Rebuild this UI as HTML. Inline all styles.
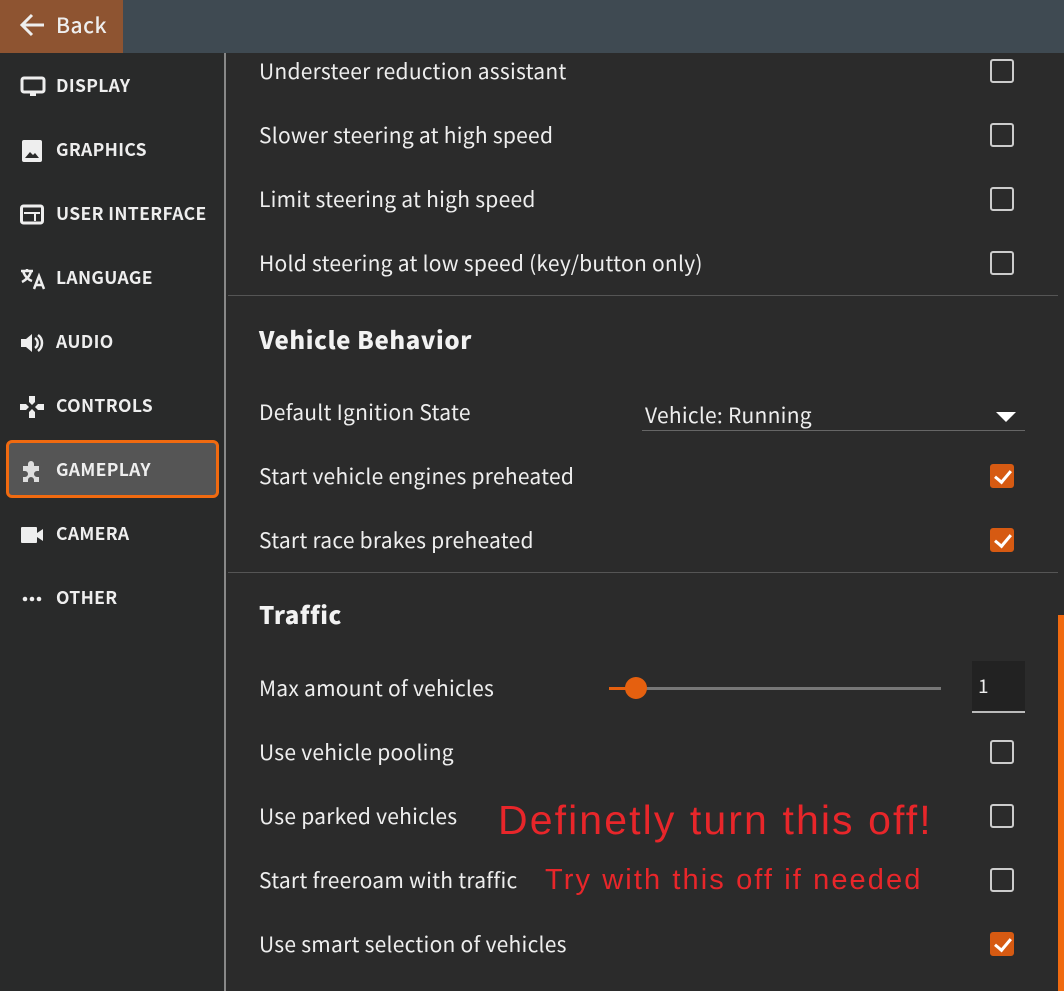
<!DOCTYPE html>
<html><head><meta charset="utf-8"><style>
*{margin:0;padding:0;box-sizing:border-box}
body{width:1064px;height:991px;overflow:hidden;background:#2b2b2b;font-family:"Noto Sans CJK SC","Liberation Sans",sans-serif;color:#eee;position:relative}
.top{position:absolute;left:0;top:0;width:1064px;height:53px;background:#3f4a52}
.back{position:absolute;left:0;top:0;width:123px;height:53px;background:#8e5431;color:#eee;font-size:21px;font-weight:500;line-height:50px;padding-left:56px;letter-spacing:.5px}
.back svg{position:absolute;left:20px;top:13px}
.side{position:absolute;left:0;top:53px;width:226px;height:938px;background:#292a2a;border-right:2px solid #888}
.nav{position:absolute;left:20px;height:30px;font-size:17.5px;font-weight:700;line-height:30px;padding-left:36px;color:#eee;letter-spacing:.35px}
.nav svg{position:absolute;left:0;top:5px}
.sel{position:absolute;left:6px;top:387px;width:213px;height:58px;border:3px solid #f06a10;border-radius:6px;background:#555}
.main{position:absolute;left:228px;top:53px;width:836px;height:938px}
.row{position:absolute;left:31px;font-size:21px;line-height:28px;color:#eee;letter-spacing:.25px}
.cb{position:absolute;left:762px;width:24px;height:24px;border:2px solid #ccc;border-radius:3px}
.cb.on{background:#d65a12;border-color:#d65a12}
.cb.on::after{content:"";position:absolute;left:6px;top:1px;width:7px;height:13px;border:solid #fff;border-width:0 3px 3px 0;transform:rotate(40deg)}
.sep{position:absolute;left:0;width:830px;height:1px;background:#555}
h2{position:absolute;left:31px;font-size:24px;font-weight:900;color:#f2f2f2;letter-spacing:.6px}
.red{position:absolute;color:#e8262a;font-family:"Liberation Sans",sans-serif}
</style></head><body>
<div class="top"></div>
<div class="back"><svg width="26" height="24" viewBox="0 0 26 24"><path d="M12 2L2 12l10 10M2 12h22" stroke="#eee" stroke-width="3" fill="none"/></svg>Back</div>
<div class="side">
<div class="nav" style="top:18px"><svg width="26" height="22" viewBox="0 0 26 22"><rect x="2" y="2" width="22" height="14" rx="2" fill="none" stroke="#eee" stroke-width="3"/><rect x="10" y="17" width="6" height="3" fill="#eee"/></svg>DISPLAY</div>
<div class="nav" style="top:82px"><svg width="24" height="22" viewBox="0 0 24 22"><rect x="2" y="0" width="20" height="22" rx="2" fill="#eee"/><path d="M5 18l5-6 3 3 2-2 4 5z" fill="#292a2a"/></svg>GRAPHICS</div>
<div class="nav" style="top:146px"><svg width="24" height="22" viewBox="0 0 24 22"><rect x="1.5" y="2" width="21" height="17" rx="2" fill="none" stroke="#eee" stroke-width="3"/><rect x="4" y="8" width="16" height="2" fill="#eee"/><rect x="14" y="10" width="2" height="7" fill="#eee"/></svg>USER INTERFACE</div>
<div class="nav" style="top:210px"><svg width="26" height="22" viewBox="0 0 26 22"><path d="M1 3h12M7 1v2M3 3c2 6 6 9 9 10M11 3c-1 5-5 9-9 11M14 21l5-13 5 13M16 17h6" stroke="#eee" stroke-width="2.5" fill="none"/></svg>LANGUAGE</div>
<div class="nav" style="top:274px"><svg width="24" height="22" viewBox="0 0 24 22"><path d="M1 7h5l6-5v18l-6-5H1z" fill="#eee"/><path d="M15 6a6 6 0 010 10M18 3a10 10 0 010 16" stroke="#eee" stroke-width="2.5" fill="none"/></svg>AUDIO</div>
<div class="nav" style="top:338px"><svg width="24" height="22" viewBox="0 0 24 22"><path d="M9 0h6v6l-3 3-3-3zM9 22h6v-6l-3-3-3 3zM0 8v6h6l3-3-3-3zM24 8v6h-6l-3-3 3-3z" fill="#eee"/></svg>CONTROLS</div>
<div class="sel"></div>
<div class="nav" style="top:402px"><svg width="24" height="24" viewBox="0 0 24 24"><path d="M3 6h5V4a3 3 0 016 0v2h5v5h-2a3 3 0 000 6h2v5h-5v-2a3 3 0 00-6 0v2H3v-5h2a3 3 0 000-6H3z" fill="#ddd"/></svg>GAMEPLAY</div>
<div class="nav" style="top:466px"><svg width="24" height="22" viewBox="0 0 24 22"><rect x="1" y="3" width="16" height="16" rx="1" fill="#eee"/><path d="M17 9l6-4v12l-6-4z" fill="#eee"/></svg>CAMERA</div>
<div class="nav" style="top:530px"><svg width="24" height="22" viewBox="0 0 24 22"><circle cx="5" cy="11" r="2.3" fill="#eee"/><circle cx="12" cy="11" r="2.3" fill="#eee"/><circle cx="19" cy="11" r="2.3" fill="#eee"/></svg>OTHER</div>
</div>
<div class="main">
<div class="row" style="top:4px">Understeer reduction assistant</div><div class="cb" style="top:6px"></div>
<div class="row" style="top:68px">Slower steering at high speed</div><div class="cb" style="top:70px"></div>
<div class="row" style="top:132px">Limit steering at high speed</div><div class="cb" style="top:134px"></div>
<div class="row" style="top:196px">Hold steering at low speed (key/button only)</div><div class="cb" style="top:198px"></div>
<div class="sep" style="top:242px"></div>
<h2 style="top:268px">Vehicle Behavior</h2>
<div class="row" style="top:345px">Default Ignition State</div>
<div class="row" style="top:348px;left:417px">Vehicle: Running</div>
<div style="position:absolute;left:768px;top:359px;border-left:10px solid transparent;border-right:10px solid transparent;border-top:10px solid #fff"></div>
<div style="position:absolute;left:414px;top:377px;width:383px;height:1px;background:#666"></div>
<div class="row" style="top:409px">Start vehicle engines preheated</div><div class="cb on" style="top:411px"></div>
<div class="row" style="top:473px">Start race brakes preheated</div><div class="cb on" style="top:475px"></div>
<div class="sep" style="top:519px"></div>
<h2 style="top:543px">Traffic</h2>
<div class="row" style="top:621px">Max amount of vehicles</div>
<div style="position:absolute;left:381px;top:634px;width:332px;height:3px;background:#777"></div>
<div style="position:absolute;left:381px;top:634px;width:26px;height:3px;background:#e5600f"></div>
<div style="position:absolute;left:397px;top:624px;width:22px;height:22px;border-radius:50%;background:#e5600f"></div>
<div style="position:absolute;left:744px;top:608px;width:53px;height:52px;background:#222;border-bottom:2px solid #bbb;font-size:19px;line-height:50px;padding-left:6px">1</div>
<div class="row" style="top:685px">Use vehicle pooling</div><div class="cb" style="top:687px"></div>
<div class="row" style="top:749px">Use parked vehicles</div><div class="cb" style="top:751px"></div>
<div class="row" style="top:813px">Start freeroam with traffic</div><div class="cb" style="top:815px"></div>
<div class="row" style="top:877px">Use smart selection of vehicles</div><div class="cb on" style="top:879px"></div>
</div>
<div style="position:absolute;left:1058px;top:615px;width:6px;height:376px;background:#f06a10"></div>
<div class="red" style="left:498px;top:797px;font-size:41px;letter-spacing:2.1px">Definetly turn this off!</div>
<div class="red" style="left:545px;top:864px;font-size:29px;letter-spacing:2.1px">Try with this off if needed</div>
</body></html>
